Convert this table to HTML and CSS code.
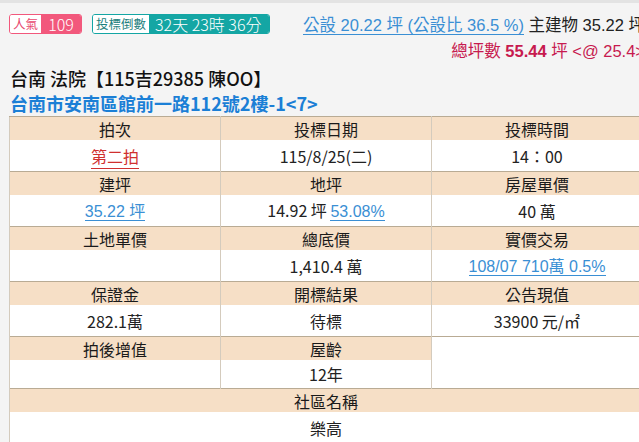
FILE: index.html
```html
<!DOCTYPE html>
<html lang="zh-Hant">
<head>
<meta charset="utf-8">
<title>台南 法院</title>
<link rel="stylesheet" href="styles.css">
</head>
<body>
<div class="topline"></div>
<div class="page">
  <div class="toprow">
    <div class="badges">
      <span class="badge pink"><span class="lbl">人氣</span><span class="val">109</span></span>
      <span class="badge teal"><span class="lbl">投標倒數</span><span class="val">32天 23時 36分</span></span>
    </div>
    <div class="area">
      <a class="link" href="#">公設 20.22 坪 (公設比 36.5 %)</a> 主建物 35.22 坪
    </div>
  </div>
  <div class="total">總坪數 <b>55.44</b> 坪 &lt;@ 25.4&gt;</div>
  <h1 class="title">台南 法院【115吉29385 陳OO】</h1>
  <div class="addr">台南市安南區館前一路112號2樓-1&lt;7&gt;</div>
  <table class="info">
    <tr class="h"><th>拍次</th><th>投標日期</th><th>投標時間</th></tr>
    <tr class="v"><td><a class="red" href="#">第二拍</a></td><td>115/8/25(二)</td><td>14：00</td></tr>
    <tr class="h"><th>建坪</th><th>地坪</th><th>房屋單價</th></tr>
    <tr class="v"><td><a class="blue" href="#">35.22 坪</a></td><td>14.92 坪 <a class="blue" href="#">53.08%</a></td><td>40 萬</td></tr>
    <tr class="h"><th>土地單價</th><th>總底價</th><th>實價交易</th></tr>
    <tr class="v"><td></td><td>1,410.4 萬</td><td><a class="blue" href="#">108/07 710萬 0.5%</a></td></tr>
    <tr class="h"><th>保證金</th><th>開標結果</th><th>公告現值</th></tr>
    <tr class="v"><td>282.1萬</td><td>待標</td><td>33900 元/㎡</td></tr>
    <tr class="h"><th>拍後增值</th><th>屋齡</th><td class="blank" rowspan="2"></td></tr>
    <tr class="v short"><td></td><td>12年</td></tr>
    <tr class="h"><th colspan="3">社區名稱</th></tr>
    <tr class="v"><td colspan="3">樂高</td></tr>
  </table>
</div>
</body>
</html>
```
FILE: styles.css
```css
html, body {
  margin: 0;
  padding: 0;
  background: #f4f4f4;
  overflow: hidden;
}
body {
  font-family: "Noto Sans CJK TC", "Liberation Sans", sans-serif;
  color: #222;
}
.topline {
  height: 3px;
  background: #e3e3e3;
}
.page {
  margin-left: 9px;
  width: 636px;
}
.toprow {
  display: flex;
  align-items: center;
  margin-top: 11px;
  height: 20px;
}
.badges {
  display: flex;
  gap: 10px;
}
.badge {
  display: flex;
  height: 20px;
  box-sizing: border-box;
  border-radius: 3px;
  line-height: 18px;
  white-space: nowrap;
}
.badge .lbl {
  background: #fff;
  font-size: 12.5px;
  padding: 0 3px;
  border-radius: 2px 0 0 2px;
}
.badge .val {
  color: #fff;
  font-weight: 300;
  font-family: "Noto Sans CJK TC", sans-serif;
  border-radius: 0 2px 2px 0;
}
.pink { border: 1px solid #f2587c; }
.pink .lbl { color: #e84a6f; }
.pink .val { background: #f2587c; font-size: 16px; width: 40px; text-align: center; }
.teal { border: 1px solid #14a6a4; }
.teal .lbl { color: #1d7f7e; }
.teal .val { background: #14a6a4; font-size: 16px; padding: 0 8px 0 6px; }
.area {
  flex: 1;
  text-align: right;
  font-size: 16.5px;
  white-space: nowrap;
  color: #222;
  font-family: "Liberation Sans", "Noto Sans CJK TC", sans-serif;
}
.link {
  color: #3a8fd4;
  text-decoration: none;
  border-bottom: 1px solid #3a8fd4;
}
.total {
  text-align: right;
  margin-top: 6px;
  font-size: 16.5px;
  line-height: 22px;
  color: #c71a4f;
  white-space: nowrap;
  font-family: "Liberation Sans", "Noto Sans CJK TC", sans-serif;
}
.total b { font-weight: bold; }
.title {
  margin: 4px 0 0 1px;
  font-size: 18px;
  font-weight: 500;
  line-height: 24px;
  color: #111;
}
.addr {
  margin: 1px 0 0 1px;
  font-size: 18px;
  font-weight: bold;
  line-height: 24px;
  color: #1b7fd6;
}
.info {
  margin-top: 1px;
  width: 634px;
  border-collapse: collapse;
  table-layout: fixed;
  font-size: 16px;
  text-align: center;
  background: #fff;
  border: 1px solid #c0b49f;
}
.info th, .info td {
  border-left: 1px solid #d4cbbd;
  border-right: 1px solid #d4cbbd;
  padding: 0;
  line-height: 20px;
}
.info tr.h th {
  background: #f6dfc6;
  font-weight: normal;
  height: 23px;
  color: #1a1a1a;
  border-top: 1px solid #b9ab94;
}
.info tr.h td.blank {
  background: #fff;
  border-top: 1px solid #b9ab94;
}
.info tr.v td {
  height: 31px;
  color: #222;
}
.info tr.v.short td {
  height: 28px;
}
.red {
  color: #d0302f;
  text-decoration: none;
  border-bottom: 1px solid #d0302f;
}
.blue {
  color: #3a8fd4;
  text-decoration: none;
  border-bottom: 1px solid #3a8fd4;
  font-family: "Liberation Sans", "Noto Sans CJK TC", sans-serif;
}
```
